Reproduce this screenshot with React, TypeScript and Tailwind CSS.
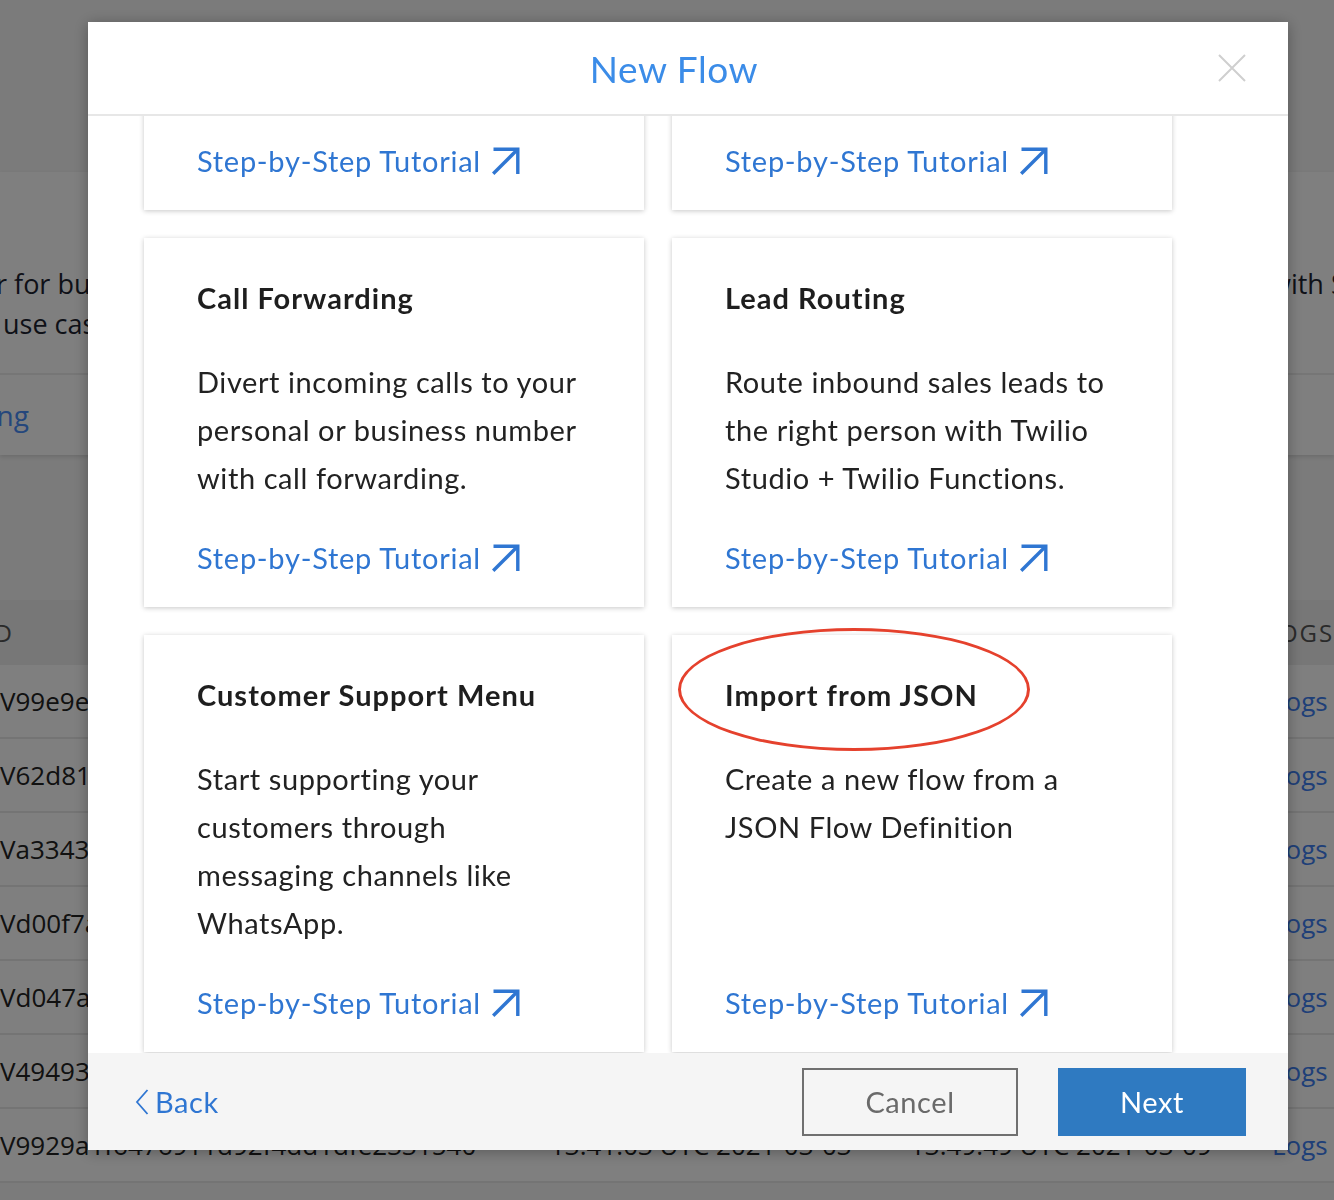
import React from "react";

type Template = {
  title: string;
  lines: string[];
  circled?: boolean;
};

const TEMPLATES: Template[] = [
  {
    title: "Appointment Reminders",
    lines: ["Send automated reminders", "and let customers confirm", "or cancel by SMS."],
  },
  {
    title: "Automated Survey",
    lines: ["Collect feedback from your", "customers over voice or", "messaging channels."],
  },
  {
    title: "Call Forwarding",
    lines: ["Divert incoming calls to your", "personal or business number", "with call forwarding."],
  },
  {
    title: "Lead Routing",
    lines: ["Route inbound sales leads to", "the right person with Twilio", "Studio + Twilio Functions."],
  },
  {
    title: "Customer Support Menu",
    lines: ["Start supporting your", "customers through", "messaging channels like", "WhatsApp."],
  },
  {
    title: "Import from JSON",
    lines: ["Create a new flow from a", "JSON Flow Definition"],
    circled: true,
  },
];

const EXECUTIONS = [
  { sid: "V99e9e3b1a0c4f27d6e41f0b2c9a7d3e8", started: "13:02:11 UTC 2021-03-09", ended: "13:02:40 UTC 2021-03-09" },
  { sid: "V62d81f0a9c3be4471d2a8e6c5f01b9d4", started: "12:47:53 UTC 2021-03-09", ended: "12:48:20 UTC 2021-03-09" },
  { sid: "Va3343c7e1d0f92a6b84e5f1c2d7a90b3", started: "11:15:06 UTC 2021-03-08", ended: "11:15:31 UTC 2021-03-08" },
  { sid: "Vd00f7a2b5e9c41d3f0a68b7e2c4d1f95", started: "16:22:48 UTC 2021-03-05", ended: "16:23:02 UTC 2021-03-05" },
  { sid: "Vd047a91c3e2f5b0d86a4c7e1f9b2d3a0", started: "09:38:17 UTC 2021-03-04", ended: "09:38:55 UTC 2021-03-04" },
  { sid: "V494938e0f1c7a2d5b9e64f3a0c8d2b17", started: "14:05:29 UTC 2021-03-03", ended: "14:06:01 UTC 2021-03-03" },
  { sid: "V9929a1f6476911d92f4dd1dfe2331540", started: "13:41:03 UTC 2021-03-03", ended: "13:49:49 UTC 2021-03-09" },
];

function TutorialArrow() {
  return (
    <svg viewBox="0 0 28 28" width={28} height={28} fill="none" aria-hidden className="shrink-0">
      <path d="M1.5 2.2H25.8V27" stroke="currentColor" strokeWidth={3.4} strokeLinejoin="miter" />
      <path d="M1.2 26.8L24.5 3.5" stroke="currentColor" strokeWidth={3.4} />
    </svg>
  );
}

function TemplateCard({ template }: { template: Template }) {
  return (
    <div className="relative flex flex-col bg-white px-[53px] pt-[42px] pb-[31px] shadow-[0_1px_5px_rgba(0,0,0,0.22)]">
      <h3 className="whitespace-nowrap text-[29px] font-bold leading-[36px] tracking-[0.035em] text-[#1e1e1e]">
        {template.title}
      </h3>
      <p className="mt-[42px] whitespace-nowrap text-[29px] leading-[48px] tracking-[0.02em] text-[#222222]">
        {template.lines.map((line, i) => (
          <span key={i} className="block">
            {line}
          </span>
        ))}
      </p>
      <a
        href="#"
        className="mt-auto flex items-center gap-[11px] pt-[38px] text-[29px] leading-[36px] tracking-[0.025em] text-[#2f76d2]"
      >
        Step-by-Step Tutorial
        <TutorialArrow />
      </a>
      {template.circled && (
        <div
          className="pointer-events-none absolute left-[6px] top-[-7px] h-[123px] w-[352px] rounded-[50%] border-[3px] border-[#e5412d]"
          aria-hidden
        />
      )}
    </div>
  );
}

function NewFlowModal() {
  return (
    <div className="ml-[88px] mt-[22px] flex h-[1128px] w-[1200px] flex-col bg-white font-[family-name:Lato,sans-serif] shadow-[0_2px_14px_rgba(0,0,0,0.3)]">
      <header className="grid h-[94px] shrink-0 grid-cols-[1fr_auto_1fr] items-center border-b-2 border-[#e7e7e7] pr-[28px]">
        <span />
        <h2 className="text-[37px] leading-none tracking-[0.015em] text-[#3b8ce8]">New Flow</h2>
        <button type="button" aria-label="Close" className="mr-[14px] justify-self-end text-[#cfcfcf]">
          <svg viewBox="0 0 28 28" width={28} height={28} fill="none" aria-hidden>
            <path d="M1 1L27 27M27 1L1 27" stroke="currentColor" strokeWidth={2} />
          </svg>
        </button>
      </header>

      <div
        className="flex-1 overflow-hidden"
        ref={(el) => {
          if (el) el.scrollTop = 303;
        }}
      >
        <div className="ml-[56px] grid w-[1028px] grid-cols-2 gap-[28px] py-[28px]">
          {TEMPLATES.map((t) => (
            <TemplateCard key={t.title} template={t} />
          ))}
        </div>
      </div>

      <footer className="flex h-[97px] shrink-0 items-center bg-[#f5f5f5] pl-[47px] pr-[42px] text-[29px] tracking-[0.02em]">
        <a href="#" className="flex items-center gap-[6px] leading-none text-[#2f76d2]">
          <svg viewBox="0 0 14 28" width={14} height={28} fill="none" aria-hidden>
            <path d="M12.5 2L2 14L12.5 26" stroke="currentColor" strokeWidth={1.8} />
          </svg>
          Back
        </a>
        <button type="button" className="ml-auto h-[68px] w-[216px] border-2 border-[#707070] text-[#6a6a6a]">
          Cancel
        </button>
        <button type="button" className="ml-[40px] h-[68px] w-[188px] bg-[#2f7ac1] text-white">
          Next
        </button>
      </footer>
    </div>
  );
}

export default function App() {
  return (
    <div className="relative h-[1200px] w-full overflow-hidden bg-[#f6f6f6] font-[family-name:'Open_Sans',sans-serif] text-[#1d2330]">
      <div className="h-[172px]" />

      <section className="bg-white shadow-[0_2px_4px_rgba(0,0,0,0.12)]">
        <div className="flex h-[203px] border-b-2 border-[#ececec] pt-[92px] text-[27px] leading-[40px]">
          <p className="-ml-[4px] w-[1274px] shrink-0 whitespace-nowrap">
            r for business calls and other
            <br />
            &nbsp;use cases
          </p>
          <p className="shrink-0 whitespace-nowrap">with Studio</p>
        </div>
        <div className="flex h-[80px] items-center">
          <div className="flex w-[29px] justify-end overflow-hidden whitespace-nowrap">
            <a href="#" className="text-[28px] text-[#4a8ff8]">
              Call Forwarding
            </a>
          </div>
        </div>
      </section>

      <div className="h-[145px]" />

      <div className="bg-white">
        <div className="flex h-[65px] items-center bg-[#eeeeee] text-[24px] uppercase tracking-[0.08em] text-[#555555]">
          <div className="flex w-[14px] justify-end overflow-hidden whitespace-nowrap">Sid</div>
          <span className="ml-[536px] w-[360px]">Started</span>
          <span className="w-[362px]">Ended</span>
          <span>Logs</span>
        </div>
        {EXECUTIONS.map((row) => (
          <div
            key={row.sid}
            className="flex h-[74px] items-center border-b-2 border-[#e9e9e9] text-[26px] text-[#222222]"
          >
            <span className="w-[550px] whitespace-nowrap">{row.sid}</span>
            <span className="w-[360px] whitespace-nowrap">{row.started}</span>
            <span className="w-[362px] whitespace-nowrap">{row.ended}</span>
            <a href="#" className="text-[#3e7ef0]">
              Logs
            </a>
          </div>
        ))}
      </div>

      <div className="fixed inset-0 bg-black/50">
        <NewFlowModal />
      </div>
    </div>
  );
}
